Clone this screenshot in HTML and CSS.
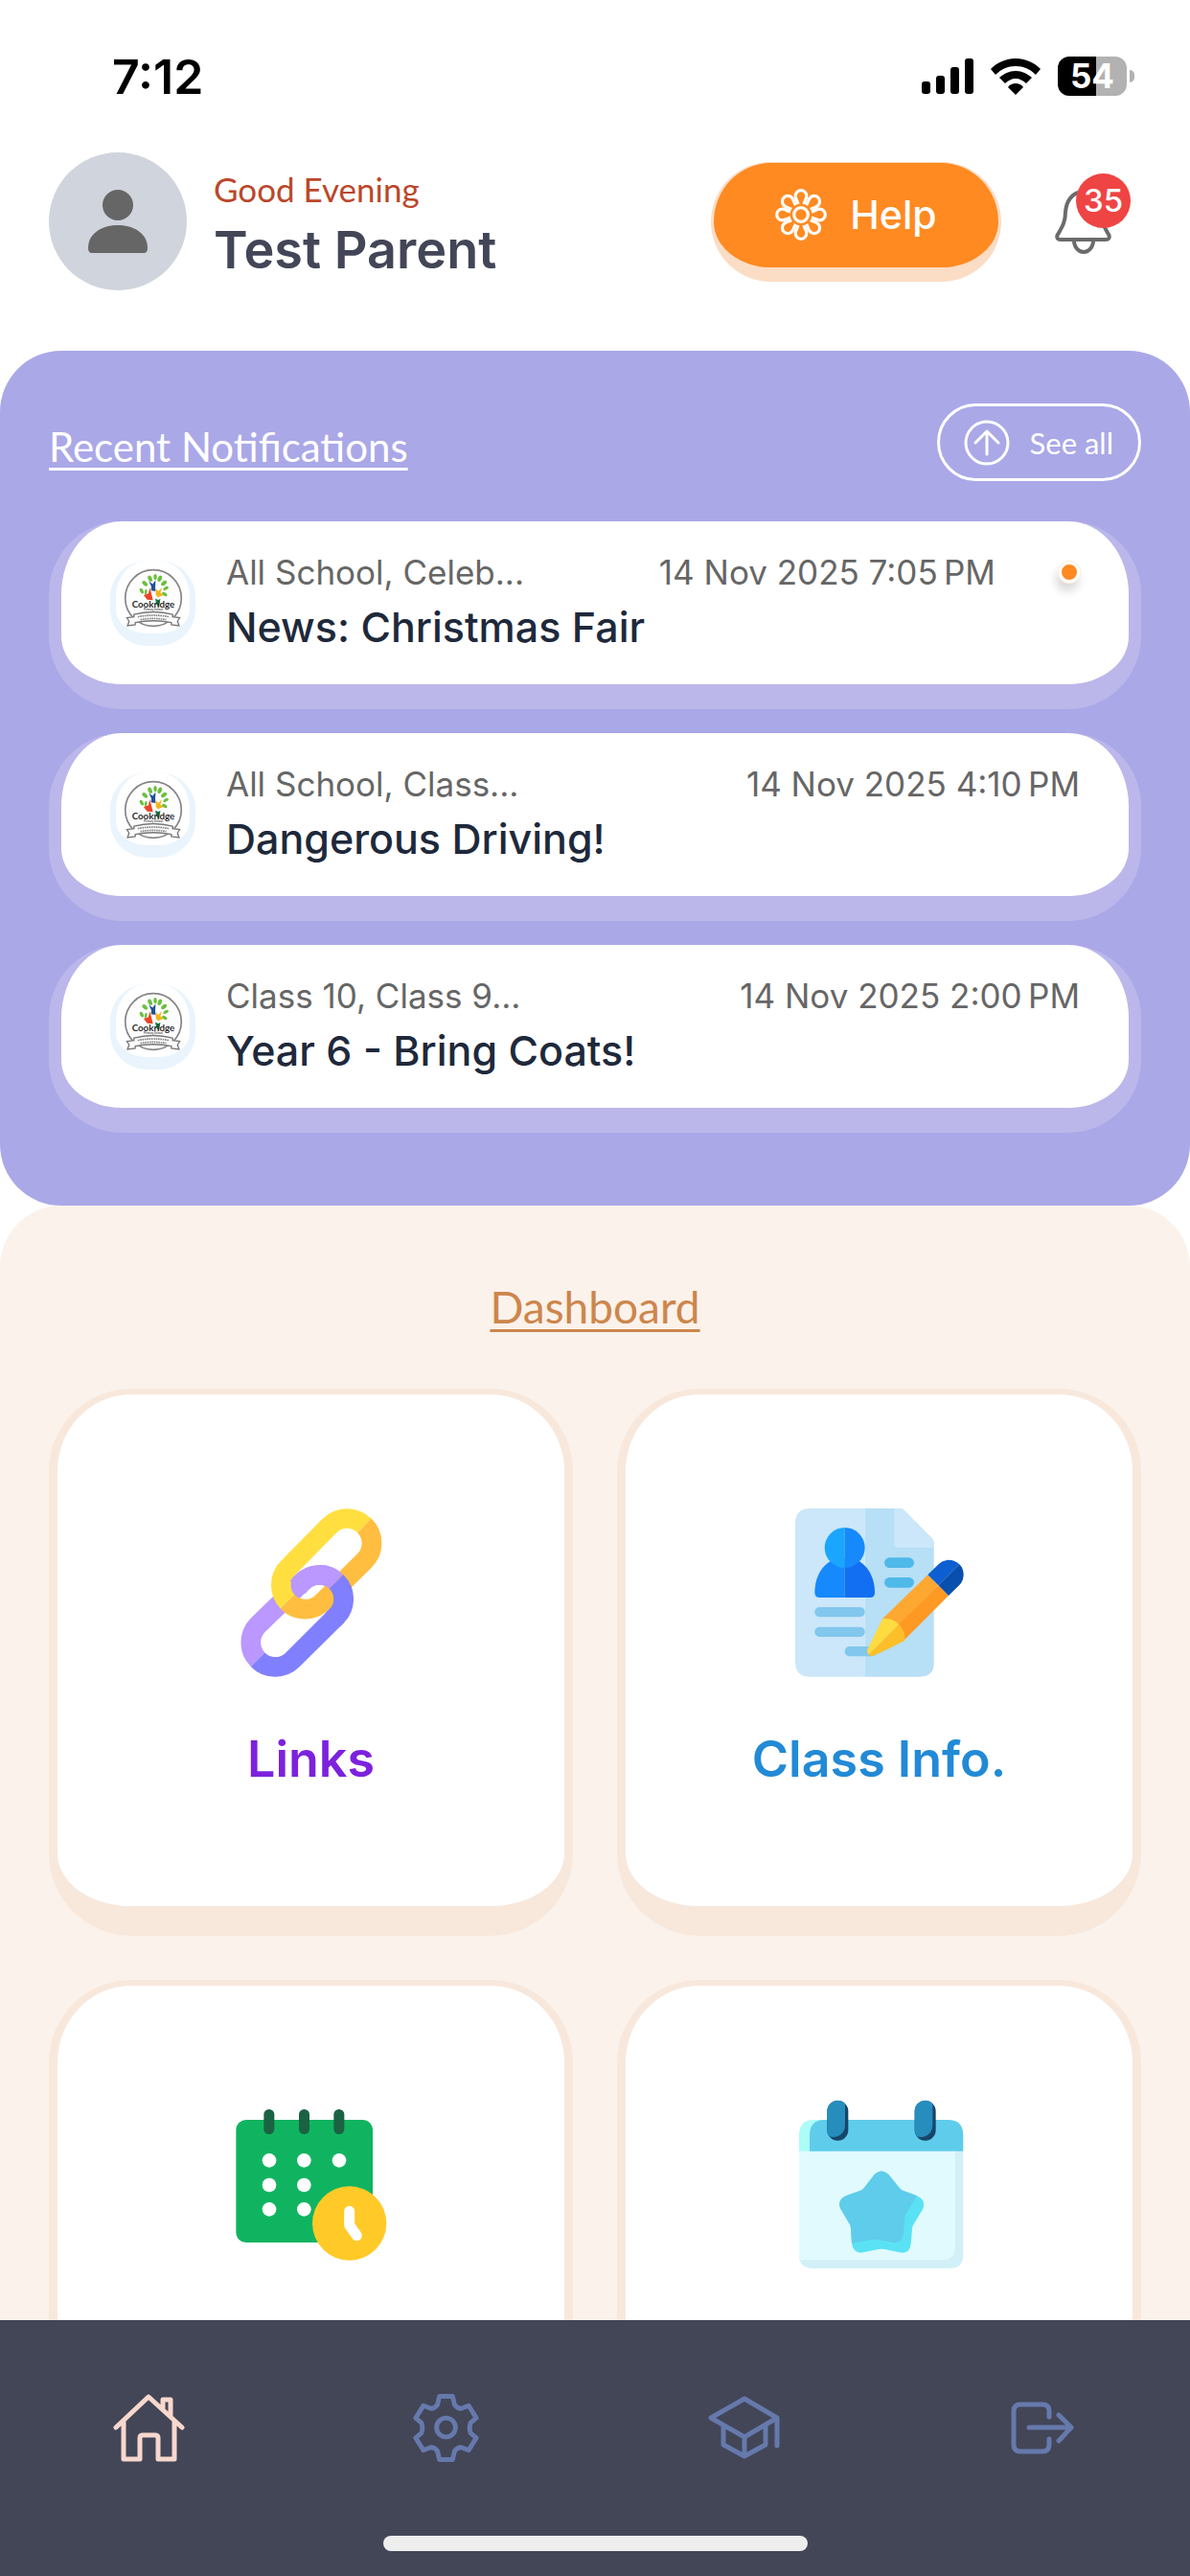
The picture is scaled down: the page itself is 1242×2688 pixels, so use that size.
FILE: index.html
```html
<!DOCTYPE html>
<html lang="en">
<head>
    <meta charset="UTF-8">
    <meta name="viewport" content="width=device-width, initial-scale=1.0">
    <title>Parent Dashboard</title>
    <link rel="stylesheet" href="styles.css">
</head>
<body>
    <!-- shared school crest -->
    <svg class="sprite" aria-hidden="true">
        <symbol id="crest" viewBox="85 95 190 190">
            <circle cx="180" cy="193" r="87" fill="#fdfdfd" stroke="#858585" stroke-width="5"/>
            <g fill="#6abf3c">
                <ellipse cx="170" cy="133" rx="6" ry="10" transform="rotate(-25 170 133)"/>
                <ellipse cx="186" cy="128" rx="5" ry="9"/>
                <ellipse cx="200" cy="133" rx="6" ry="10" transform="rotate(25 200 133)"/>
                <ellipse cx="154" cy="148" rx="6" ry="10" transform="rotate(-45 154 148)"/>
                <ellipse cx="213" cy="147" rx="6" ry="10" transform="rotate(50 213 147)"/>
                <ellipse cx="144" cy="171" rx="5" ry="9" transform="rotate(-30 144 171)"/>
                <ellipse cx="157" cy="174" rx="4" ry="8" transform="rotate(10 157 174)"/>
                <ellipse cx="219" cy="163" rx="5" ry="9" transform="rotate(60 219 163)"/>
                <ellipse cx="215" cy="181" rx="5" ry="9" transform="rotate(-60 215 181)"/>
            </g>
            <path d="M166 141l12 9 9-12-1 24 1 10-14-2 1-13z" fill="#1f4f9c"/>
            <path d="M150 184l15-5 4-18 6 22 4 17-18-2z" fill="#ea4427"/>
            <path d="M187 162l8 10 12-12-5 16 10 8-18 7-6-8z" fill="#f2b51d"/>
            <path d="M186 195l10 4 6-4-2 14-3 14-8-12z" fill="#177a45"/>
            <text x="180" y="222" text-anchor="middle" class="crest-name">Cookridge</text>
            <text x="180" y="233" text-anchor="middle" class="crest-sub">Primary School</text>
            <path d="M98 254l22-3v-7q60-16 120 0v7l22 3-7 11 5 14-24-3v-7q-56-11-112 0v7l-24 3 5-14z" fill="#fafafa" stroke="#777" stroke-width="4"/>
            <path d="M132 251q48-9 96 0M140 260q40-7 80 0" fill="none" stroke="#8a8a8a" stroke-width="5" stroke-dasharray="5 2"/>
        </symbol>
    </svg>

    <div class="status-bar">
        <span class="time">7:12</span>
        <div class="status-icons">
            <svg width="54" height="38" viewBox="0 0 54 38">
                <rect x="0" y="24" width="9" height="13" rx="3"/>
                <rect x="15" y="18" width="9" height="19" rx="3"/>
                <rect x="30" y="9" width="9" height="28" rx="3"/>
                <rect x="45" y="0" width="9" height="37" rx="3"/>
            </svg>
            <svg width="52" height="38" viewBox="0 0 52 38">
                <path d="M26 0C16 0 7 4 0 11l5 6C11 11 18 8 26 8s15 3 21 9l5-6C45 4 36 0 26 0z"/>
                <path d="M26 13c-7 0-12 3-17 7l6 6c3-3 7-5 11-5s8 2 11 5l6-6c-5-4-10-7-17-7z"/>
                <path d="M26 26c-3 0-6 1-8 4l8 8 8-8c-2-3-5-4-8-4z"/>
            </svg>
            <div class="battery"><span>54</span></div>
        </div>
    </div>

    <header class="header">
        <div class="avatar">
            <svg width="64" height="68" viewBox="0 0 64 68">
                <circle cx="32" cy="17" r="16"/>
                <path d="M1 62C1 46 16 38 32 38s31 8 31 24q0 5-4 5H5q-4 0-4-5z"/>
            </svg>
        </div>
        <div class="greeting">
            <p class="hello">Good Evening</p>
            <p class="user-name">Test Parent</p>
        </div>
        <button class="help-button">
            <svg width="54" height="54" viewBox="-27 -27 54 54" fill="none" stroke="#fff" stroke-width="3.200">
                <defs><path id="petal" d="M-3-11C-4-15-5.800-16-5.800-19.500A5.800 5.800 0 0 1 5.800-19.500C5.800-16 4-15 3-11"/></defs>
                <circle r="7.300"/>
                <use href="#petal"/>
                <use href="#petal" transform="rotate(45)"/>
                <use href="#petal" transform="rotate(90)"/>
                <use href="#petal" transform="rotate(135)"/>
                <use href="#petal" transform="rotate(180)"/>
                <use href="#petal" transform="rotate(225)"/>
                <use href="#petal" transform="rotate(270)"/>
                <use href="#petal" transform="rotate(315)"/>
            </svg>
            Help
        </button>
        <button class="bell-button" aria-label="Notifications">
            <svg width="60" height="70" viewBox="0 0 60 70" fill="none" stroke="#6b6b6b" stroke-width="4">
                <path d="M30 4C18 4 12 14 11 25C11 35 8 40 4 47C1 51 2 54 6 54H53C57 54 58 51 55 47C51 40 49 35 49 25C48 14 42 4 30 4Z"/>
                <path d="M20 55a10 12 0 0 0 20 0"/>
            </svg>
            <span class="badge">35</span>
        </button>
    </header>

    <main class="content">
        <section class="notifications">
            <div class="section-head">
                <h2 class="section-title">Recent Notifications</h2>
                <a href="#" class="see-all">
                    <svg width="50" height="50" viewBox="0 0 50 50" fill="none" stroke="#fff" stroke-width="3" stroke-linecap="round" stroke-linejoin="round">
                        <circle cx="25" cy="25" r="22"/>
                        <path d="M25 37V13M13 25l12-12 12 12"/>
                    </svg>
                    See all
                </a>
            </div>

            <a href="#" class="notice">
                <div class="crest"><svg width="64" height="64"><use href="#crest"/></svg></div>
                <div class="notice-text">
                    <div class="notice-meta">
                        <span class="groups">All School, Celeb...</span>
                        <span class="date">14 Nov 2025 7:05&#8239;PM</span>
                        <span class="unread"></span>
                    </div>
                    <p class="notice-title">News: Christmas Fair</p>
                </div>
            </a>
            <a href="#" class="notice">
                <div class="crest"><svg width="64" height="64"><use href="#crest"/></svg></div>
                <div class="notice-text">
                    <div class="notice-meta">
                        <span class="groups">All School, Class...</span>
                        <span class="date">14 Nov 2025 4:10&#8239;PM</span>
                    </div>
                    <p class="notice-title">Dangerous Driving!</p>
                </div>
            </a>
            <a href="#" class="notice">
                <div class="crest"><svg width="64" height="64"><use href="#crest"/></svg></div>
                <div class="notice-text">
                    <div class="notice-meta">
                        <span class="groups">Class 10, Class 9...</span>
                        <span class="date">14 Nov 2025 2:00&#8239;PM</span>
                    </div>
                    <p class="notice-title">Year 6 - Bring Coats!</p>
                </div>
            </a>
        </section>

        <section class="dashboard">
            <h2 class="dashboard-title">Dashboard</h2>
            <div class="tiles">
                <a href="#" class="tile links">
                    <svg class="tile-icon" viewBox="50 102 528 528" fill="none" stroke-width="62">
                        <!-- purple link, yellow link on top, then the purple part that crosses over -->
                        <path d="M146 575A77 77 0 0 1 147 467L284 334A77 77 0 0 1 392 331" stroke="#ba98ff"/>
                        <path d="M146 575A77 77 0 0 0 255 576L392 440A77 77 0 0 0 392 331" stroke="#8080ff"/>
                        <path d="M240 395A77 77 0 0 1 240 289L371 156A77 77 0 0 1 480 156" stroke="#ffdf40"/>
                        <path d="M480 156A77 77 0 0 1 480 266L348 396A77 77 0 0 1 240 395" stroke="#ffbe40"/>
                        <path d="M271 349L284 334A77 77 0 0 1 392 331" stroke="#ba98ff"/>
                        <path d="M392 331A77 77 0 0 1 392 440L380 452" stroke="#8080ff"/>
                    </svg>
                    <span class="tile-label">Links</span>
                </a>
                <a href="#" class="tile class-info">
                    <svg class="tile-icon" viewBox="87 102 528 528">
                        <path d="M134 102H305V629H134Q87 629 87 582V149Q87 102 134 102z" fill="#cbe7f9"/>
                        <path d="M305 102H415Q422 102 428 108L514 194Q521 200 521 209V586Q521 629 478 629H305z" fill="#b7dff5"/>
                        <path d="M397 102H415Q422 102 428 108L514 194Q521 200 521 225H412Q397 225 397 210z" fill="#cbe7f9"/>
                        <path d="M242 256C180 256 148 310 148 366Q148 381 163 381H242z" fill="#1689fc"/>
                        <path d="M242 256C304 256 336 310 336 366Q336 381 321 381H242z" fill="#136ff1"/>
                        <path d="M242 162a63 63 0 0 0 0 126z" fill="#1aa6fe"/>
                        <path d="M242 162a63 63 0 0 1 0 126z" fill="#1689fc"/>
                        <g fill="#4fb9e9">
                            <rect x="366" y="256" width="93" height="32" rx="16"/>
                            <rect x="366" y="318" width="93" height="32" rx="16"/>
                        </g>
                        <g fill="#82c7ed">
                            <rect x="148" y="411" width="157" height="31" rx="15"/>
                            <rect x="148" y="473" width="157" height="31" rx="15"/>
                            <rect x="242" y="534" width="100" height="31" rx="15"/>
                        </g>
                        <path d="M360 448L502 310L535 343L400 478z" fill="#fea832"/>
                        <path d="M535 343L567 375L430 512L398 478z" fill="#fe9923"/>
                        <path d="M502 310L531 281Q545 265 566 263Q588 263 601 277L535 343z" fill="#0d5fd1"/>
                        <path d="M601 277Q614 290 614 309Q614 330 600 343L567 375L535 343z" fill="#094fae"/>
                        <path d="M360 448Q388 443 412 465L317 560Q308 550 315 540z" fill="#fedb41"/>
                        <path d="M412 465Q433 488 430 515Q425 519 335 562Q324 567 317 560z" fill="#fcbf29"/>
                    </svg>
                    <span class="tile-label">Class Info.</span>
                </a>
                <a href="#" class="tile" aria-label="Calendar">
                    <svg class="tile-icon" viewBox="50 63 528 528">
                        <rect x="78" y="126" width="428" height="384" rx="32" fill="#10b460"/>
                        <g fill="#1b6243">
                            <rect x="165" y="93" width="33" height="78" rx="16"/>
                            <rect x="275" y="93" width="33" height="78" rx="16"/>
                            <rect x="384" y="93" width="33" height="78" rx="16"/>
                        </g>
                        <g fill="#fff">
                            <circle cx="182" cy="253" r="22"/>
                            <circle cx="291" cy="253" r="22"/>
                            <circle cx="401" cy="253" r="22"/>
                            <circle cx="182" cy="330" r="22"/>
                            <circle cx="291" cy="330" r="22"/>
                            <circle cx="182" cy="406" r="22"/>
                            <circle cx="291" cy="406" r="22"/>
                        </g>
                        <circle cx="433" cy="450" r="116" fill="#ffca28"/>
                        <path d="M433 412V456L456 488" fill="none" stroke="#fff" stroke-width="33" stroke-linecap="round" stroke-linejoin="round"/>
                    </svg>
                </a>
                <a href="#" class="tile" aria-label="Events">
                    <svg class="tile-icon" viewBox="87 63 528 528">
                        <path d="M99 224H613V548Q613 591 570 591H142Q99 591 99 548z" fill="#d2f0f8"/>
                        <path d="M99 224H588V522Q588 565 545 565H103Q99 557 99 548z" fill="#e1fafe"/>
                        <path d="M147 126H200V224H99V174Q99 126 147 126z" fill="#acfcf8"/>
                        <path d="M180 126H565Q613 126 613 174V224H132V174Q132 126 180 126z" fill="#5fcceb"/>
                        <rect x="187" y="66" width="66" height="125" rx="33" fill="#17466b"/>
                        <path d="M187 99a33 33 0 0 1 56-24V144a36 36 0 0 1-50 33Q187 168 187 158z" fill="#268dbd"/>
                        <rect x="461" y="66" width="66" height="125" rx="33" fill="#17466b"/>
                        <path d="M461 99a33 33 0 0 1 56-24V144a36 36 0 0 1-50 33Q461 168 461 158z" fill="#268dbd"/>
                        <path d="M335 297Q357 276 379 297L413 339Q417 344 423 347L468 364Q496 376 487 404L456 456Q453 462 453 468L449 515Q446 542 420 542L366 531Q357 529 348 531L293 542Q267 540 264 512L261 466Q261 460 258 454L228 403Q218 376 246 364L292 347Q298 345 302 340z" fill="#5ae2f4"/>
                        <path d="M335 297Q357 276 379 297L413 339Q417 344 423 347L468 364L434 420Q430 426 430 433L426 481Q423 512 397 511L343 501Q336 500 329 501L264 512L261 466Q261 460 258 454L228 403Q218 376 246 364L292 347Q298 345 302 340z" fill="#5fcceb"/>
                    </svg>
                </a>
            </div>
        </section>
    </main>

    <nav class="bottom-nav">
        <div class="nav-links">
            <a href="#" class="active" aria-label="Home">
                <svg viewBox="0 0 75 75">
                    <path d="M3 37L37 5L72 37M11 31V70H28V48q0-3 3-3H44q3 0 3 3V70H64V31M52 17V8h8V25"/>
                </svg>
            </a>
            <a href="#" aria-label="Settings">
                <svg viewBox="0 0 76 75">
                    <path d="M31 4H45L47 13Q50 17 54 17L62 14L70 27L64 32Q62 37 64 43L70 48L62 61L54 58Q50 58 47 62L45 71H31L29 62Q26 58 22 58L14 61L6 48L12 43Q14 37 12 32L6 27L14 14L22 17Q26 17 29 13z"/>
                    <circle cx="38" cy="37" r="10"/>
                </svg>
            </a>
            <a href="#" aria-label="Classes">
                <svg viewBox="0 0 75 75">
                    <path d="M3 27L38 7L72 27L38 47zM72 27V56M16 36V55L38 67L60 55V36M38 47V67"/>
                </svg>
            </a>
            <a href="#" aria-label="Log out">
                <svg viewBox="0 0 75 75">
                    <path d="M46 26V20q0-7-7-7H16q-7 0-7 7V55q0 7 7 7H39q7 0 7-7V49M25 37H69M56 24L69 37L56 51"/>
                </svg>
            </a>
        </div>
        <div class="home-indicator"></div>
    </nav>
</body>
</html>
```
FILE: styles.css
```css
* {
    box-sizing: border-box;
}

body {
    font-family: Inter, 'Liberation Sans', sans-serif;
    margin: 0;
    height: 100vh;
    display: flex;
    flex-direction: column;
    overflow: hidden;
    background-color: #fff;
}

h2, p {
    margin: 0;
    font-weight: normal;
}

a {
    color: inherit;
    text-decoration: none;
}

button {
    font-family: inherit;
    border: none;
    background: none;
    padding: 0;
    cursor: pointer;
}

svg {
    display: block;
    flex-shrink: 0;
}

.sprite {
    display: none;
}

/* status bar */
.status-bar {
    height: 159px;
    flex-shrink: 0;
    padding: 0 58px 0 117px;
    display: flex;
    align-items: center;
    justify-content: space-between;
}

.time {
    font-size: 50px;
    font-weight: 600;
    color: #000;
}

.status-icons {
    display: flex;
    align-items: center;
    gap: 18px;
}

.battery {
    width: 72px;
    height: 41px;
    margin-right: 8px;
    border-radius: 12px;
    background: linear-gradient(to right, #000 55%, #b2b2b2 55%);
    color: #fff;
    font-size: 35px;
    font-weight: 700;
    line-height: 41px;
    text-align: center;
    position: relative;
}

.battery::after {
    content: "";
    position: absolute;
    right: -8px;
    top: 14px;
    width: 5px;
    height: 13px;
    border-radius: 0 5px 5px 0;
    background-color: #b2b2b2;
}

/* header */
.header {
    flex-shrink: 0;
    display: flex;
    align-items: center;
    padding: 0 51px 63px;
}

.avatar {
    width: 144px;
    height: 144px;
    border-radius: 50%;
    background-color: #d0d4dc;
    display: flex;
    align-items: center;
    justify-content: center;
    margin-right: 28px;
}

.avatar svg {
    fill: #666;
}

.greeting {
    flex: 1;
}

.hello {
    font-family: Lato, sans-serif;
    font-size: 35px;
    line-height: 60px;
    color: #bb472a;
}

.user-name {
    font-size: 54px;
    font-weight: 600;
    line-height: 68px;
    color: #424657;
}

.help-button {
    display: flex;
    align-items: center;
    justify-content: center;
    gap: 24px;
    width: 303px;
    height: 125px;
    border: solid #fbddc5;
    border-width: 1px 3px 15px;
    border-radius: 63px;
    background-color: #ff8a21;
    color: #fff;
    font-size: 41px;
    font-weight: 500;
}

.bell-button {
    position: relative;
    width: 90px;
    margin-left: 56px;
}

.badge {
    position: absolute;
    left: 22px;
    top: -15px;
    width: 57px;
    height: 57px;
    border-radius: 50%;
    background-color: #ef4444;
    color: #fff;
    font-size: 33px;
    font-weight: 500;
    line-height: 57px;
    text-align: center;
}

.content {
    flex: 1;
    min-height: 0;
    overflow: hidden;
}

/* notifications */
.notifications {
    padding: 55px 51px 76px;
    border-radius: 64px;
    background-color: #aaa8e7;
    display: flex;
    flex-direction: column;
    gap: 25px;
}

.section-head {
    display: flex;
    justify-content: space-between;
    align-items: center;
    height: 81px;
    margin-bottom: 17px;
}

.section-title,
.dashboard-title {
    font-family: Lato, sans-serif;
    text-decoration: underline;
    text-decoration-thickness: 3px;
    text-underline-offset: 6px;
    text-decoration-skip-ink: none;
}

.section-title {
    font-size: 42px;
    line-height: 72px;
    padding-top: 8px;
    color: #fff;
}

.see-all {
    display: flex;
    align-items: center;
    gap: 20px;
    height: 81px;
    padding: 0 26px 0 24px;
    border: 3px solid #fff;
    border-radius: 41px;
    color: #fff;
    font-family: Lato, sans-serif;
    font-size: 31px;
}

.notice {
    display: flex;
    align-items: center;
    gap: 32px;
    height: 196px;
    padding: 0 51px;
    border: solid #bbb7eb;
    border-width: 0 13px 26px;
    border-radius: 76px;
    background-color: #fff;
}

.crest {
    width: 89px;
    height: 89px;
    border: solid #e9f4fc;
    border-width: 0 6px 13px;
    border-radius: 38px;
    display: flex;
    align-items: center;
    justify-content: center;
}

.crest-name {
    font: bold 29px Lato, sans-serif;
    fill: #2d2d2d;
}

.crest-sub {
    font: bold 9px Lato, sans-serif;
    fill: #555;
}

.notice-text {
    flex: 1;
}

.notice-meta {
    display: flex;
    align-items: center;
    font-size: 35px;
    line-height: 50px;
    color: #666;
}

.date {
    margin-left: auto;
}

.unread {
    width: 22px;
    height: 22px;
    margin-left: 66px;
    border: 3px solid #fff;
    border-radius: 50%;
    background-color: #ff8a21;
    box-shadow: 0 0 0 1px #ffeedf, -2px 8px 10px 1px rgba(0, 0, 0, 0.15);
}

.notice-title {
    font-size: 43px;
    font-weight: 500;
    line-height: 64px;
    color: #1e293b;
}

/* dashboard */
.dashboard {
    padding: 70px 51px;
    border-radius: 64px 64px 0 0;
    background-color: #fbf2eb;
}

.dashboard-title {
    font-size: 46px;
    line-height: 72px;
    text-align: center;
    color: #cd864b;
    margin-bottom: 49px;
}

.tiles {
    display: grid;
    grid-template-columns: 1fr 1fr;
    gap: 46px;
}

.tile {
    display: flex;
    flex-direction: column;
    align-items: center;
    gap: 52px;
    height: 571px;
    padding-top: 119px;
    border: solid #f8e8dc;
    border-width: 6px 9px 31px;
    border-radius: 86px;
    background-color: #fff;
}

.tile-icon {
    width: 176px;
    height: 176px;
}

.tile-label {
    font-size: 52px;
    font-weight: 600;
    line-height: 68px;
}

.links {
    color: #7c22dd;
}

.class-info {
    color: #228ad6;
}

/* bottom navigation */
.bottom-nav {
    flex-shrink: 0;
    padding-bottom: 26px;
    background-color: #424657;
}

.nav-links {
    display: flex;
}

.nav-links a {
    flex: 1;
    height: 225px;
    display: flex;
    align-items: center;
    justify-content: center;
    color: #6679ac;
}

.nav-links a.active {
    color: #f8d7cd;
}

.nav-links svg {
    width: 75px;
    height: 75px;
    fill: none;
    stroke: currentColor;
    stroke-width: 5;
    stroke-linecap: round;
    stroke-linejoin: round;
}

.home-indicator {
    width: 443px;
    height: 16px;
    margin: 0 auto;
    border-radius: 8px;
    background-color: #eee;
}
```
